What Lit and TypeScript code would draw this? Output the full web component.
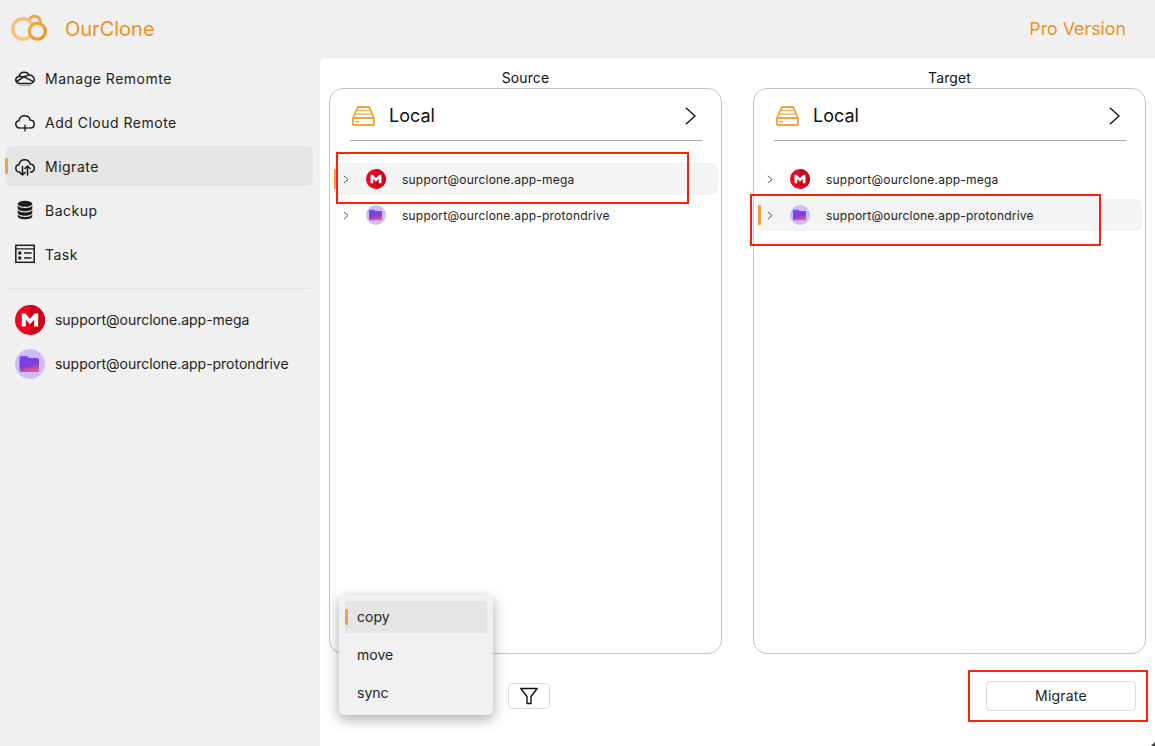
import { LitElement, html, css } from "lit";
import { customElement } from "lit/decorators.js";

const logo = html`<svg width="50" height="40" viewBox="0 0 50 40" fill="none">
  <defs>
    <linearGradient id="lg1" x1="0" y1="0" x2="1" y2="1"><stop offset="0" stop-color="#f5bb70"/><stop offset="1" stop-color="#f8c98a"/></linearGradient>
    <linearGradient id="lg2" x1="0" y1="0" x2="1" y2="1"><stop offset="0" stop-color="#f3ab4f"/><stop offset="1" stop-color="#ee9212"/></linearGradient>
  </defs>
  <circle cx="34.700" cy="12.800" r="5.700" stroke="#f0a440" stroke-width="2.800"/>
  <circle cx="23" cy="20" r="10.200" fill="#f0f0f0" stroke="url(#lg1)" stroke-width="3.400"/>
  <path d="M23 30.200H36" stroke="url(#lg1)" stroke-width="3.400"/>
  <circle cx="37.300" cy="22.200" r="8" fill="#f0f0f0" stroke="url(#lg2)" stroke-width="3.200"/>
</svg>`;

const navIcons: Record<string, unknown> = {
  manage: html`<svg width="20" height="20" viewBox="0 0 20 20" fill="none" stroke="#1c1c1c" stroke-width="1.500" stroke-linejoin="round" stroke-linecap="round">
    <path d="M4.600 15.400C2.400 15.200.8 13.800.8 11.800c0-1.800 1.400-3.200 3.200-3.400C4.500 6 6.600 4.200 9.200 4.200c2.200 0 4 1.100 4.900 2.900 2.900-.1 5.100 1.900 5.100 4.400 0 2.300-1.800 3.900-4 3.900z"/>
    <path d="M1.500 13.500 9 8.800l9.600 4.800M4.500 8.500l4.500.3M9 8.800l5-1.700"/>
    <path d="M5 17.300h10" stroke="#aaa"/>
  </svg>`,
  add: html`<svg width="20" height="20" viewBox="0 0 20 20" fill="none" stroke="#1c1c1c" stroke-width="1.500" stroke-linecap="round" stroke-linejoin="round">
    <path d="M5.500 16H4.600C2.300 16 .8 14.300.8 12.300c0-2 1.400-3.500 3.200-3.600C4.500 5.900 6.800 3.800 9.700 3.800c2.700 0 4.800 1.700 5.400 4.300 2.400.1 4.100 1.900 4.100 4.100 0 2.100-1.500 3.800-3.700 3.800h-1"/>
    <path d="M10 13v6M7 16h6" stroke-width="1.300"/>
  </svg>`,
  migrate: html`<svg width="20" height="20" viewBox="0 0 20 20" fill="none" stroke="#1c1c1c" stroke-width="1.500" stroke-linecap="round" stroke-linejoin="round">
    <path d="M4.500 16C2.300 16 .8 14.300.8 12.300c0-2 1.400-3.500 3.200-3.600C4.500 5.900 6.800 3.800 9.700 3.800c2.700 0 4.800 1.700 5.400 4.300 2.400.1 4.100 1.900 4.100 4.100 0 2.100-1.500 3.800-3.700 3.800"/>
    <path d="M7.500 10.500v8.500M5 16.500 7.500 19l2.500-2.500M12.500 19v-9M10 12.500 12.500 10l2.500 2.500" stroke-width="1.600"/>
  </svg>`,
  backup: html`<svg width="20" height="20" viewBox="0 0 20 20" fill="#1c1c1c">
    <ellipse cx="10" cy="3.800" rx="7.300" ry="3"/>
    <path d="M2.700 5.500c1 1.700 3.900 2.500 7.300 2.500s6.300-.8 7.300-2.500v2.700c0 1.700-3.300 3-7.300 3s-7.300-1.300-7.300-3z"/>
    <path d="M2.700 10c1 1.700 3.900 2.500 7.300 2.500s6.300-.8 7.300-2.500v2.700c0 1.700-3.300 3-7.300 3s-7.300-1.300-7.300-3z"/>
    <path d="M2.700 14.400c1 1.700 3.900 2.500 7.300 2.500s6.300-.8 7.300-2.500v1.900c0 1.700-3.300 3-7.300 3s-7.300-1.300-7.300-3z"/>
  </svg>`,
  task: html`<svg width="20" height="20" viewBox="0 0 20 20" fill="none" stroke="#1c1c1c" stroke-width="1.500">
    <rect x=".8" y="1.300" width="18.400" height="17"/>
    <path d="M.8 4.800h18.400M9 9h7.500M9 14h7.500" stroke-width="1.300"/>
    <rect x="3.300" y="7.500" width="3" height="3" fill="#1c1c1c" stroke="none"/>
    <rect x="3.300" y="12.500" width="3" height="3" fill="#1c1c1c" stroke="none"/>
  </svg>`,
};

const mega = (s: number) => html`<svg width=${s} height=${s} viewBox="0 0 30 30">
  <circle cx="15" cy="15" r="15" fill="#ee0322"/>
  <path d="M15 0a15 15 0 0 1 0 30z" fill="#cc0419"/>
  <path d="M6.800 21.500V8.500h3.500L15 13.800l4.700-5.300h3.500v13h-4v-7L15 19.200l-4.200-4.700v7z" fill="#fff"/>
</svg>`;

const proton = (s: number, id: string) => html`<svg width=${s} height=${s} viewBox="0 0 30 30">
  <defs>
    <linearGradient id=${id} x1="0" y1="0" x2="0.3" y2="1">
      <stop offset="0" stop-color="#7a4cf0"/><stop offset=".65" stop-color="#7b3fd8"/><stop offset="1" stop-color="#e0558f"/>
    </linearGradient>
  </defs>
  <circle cx="15" cy="15" r="15" fill="#cfbcfb"/>
  <path d="M4.500 8.800c0-1 .8-1.800 1.800-1.800h5.200c.6 0 1.100.3 1.500.8l1 1.200h8.200c1 0 1.800.8 1.800 1.800v10.400c0 1-.8 1.800-1.800 1.800H6.300c-1 0-1.800-.8-1.800-1.800z" fill=${`url(#${id})`}/>
</svg>`;

const drive = html`<svg width="23" height="20" viewBox="0 0 23 20" fill="none" stroke="#f2a238" stroke-width="1.800" stroke-linejoin="round">
  <path d="M1.200 12 5.700 1h11.600l4.500 11"/>
  <path d="M4.700 4.600h13.600M3.200 8.300h16.600" stroke="#f5b464" stroke-width="1.500"/>
  <rect x=".9" y="12" width="21.200" height="7" rx="1"/>
  <path d="M3.300 15.700h4" stroke-width="1.400"/>
</svg>`;

const bigChevron = html`<svg width="11" height="18" viewBox="0 0 11 18" fill="none" stroke="#111" stroke-width="1.400"><path d="M.8.700 10 9 .8 17.300"/></svg>`;
const smallChevron = html`<svg width="6" height="9" viewBox="0 0 6 9" fill="none" stroke="#555" stroke-width="1"><path d="M.8.700 5 4.500.8 8.300"/></svg>`;
const funnel = html`<svg width="18" height="18" viewBox="0 0 18 18" fill="none" stroke="#111" stroke-width="1.400" stroke-linejoin="round"><path d="M.8 1.500h16.400L11 9.500v7H7v-7z"/></svg>`;

const NAV = [
  { id: "manage", label: "Manage Remomte" },
  { id: "add", label: "Add Cloud Remote" },
  { id: "migrate", label: "Migrate", active: true },
  { id: "backup", label: "Backup" },
  { id: "task", label: "Task" },
];
const MEGA = "support@ourclone.app-mega";
const PROTON = "support@ourclone.app-protondrive";

@customElement("app-root")
export class AppRoot extends LitElement {
  static styles = css`
    :host {
      display: block;
      position: relative;
      width: 100%;
      height: 100vh;
      min-height: 746px;
      background: #f0f0f0;
      font-family: Inter, "Liberation Sans", sans-serif;
      color: #222;
      overflow: hidden;
    }
    .header {
      height: 58px;
      display: flex;
      align-items: center;
      box-sizing: border-box;
      padding: 0 29px 0 0;
    }
    .logo { display: flex; margin: 0 15px 0 0; flex: none; }
    .brand { font-size: 20px; color: #ef9020; }
    .pro { margin-left: auto; font-size: 17.800px; color: #ef9020; padding-bottom: 2px; }
    .body { display: flex; height: 688px; }
    .sidebar { width: 320px; flex: none; box-sizing: border-box; padding: 0 7px 0 5px; }
    .nav { display: flex; flex-direction: column; gap: 4px; }
    .nav-item {
      position: relative;
      height: 40px;
      display: flex;
      align-items: center;
      gap: 10px;
      padding-left: 10px;
      border-radius: 6px;
      font-size: 14px;
      letter-spacing: 0.5px;
    }
    .nav-item.active { background: #e6e6e6; }
    .nav-item.active::before, .menu-item.active::before {
      content: "";
      position: absolute;
      left: 0;
      top: 12px;
      width: 3px;
      height: 16px;
      background: #f0a03c;
      border-radius: 1px;
    }
    .nav-item svg { display: block; flex: none; }
    .sep { height: 1px; background: #e0e0e0; margin: 14px 2px 11px 2px; }
    .accounts { display: flex; flex-direction: column; gap: 4px; }
    .account { height: 40px; display: flex; align-items: center; gap: 10px; padding-left: 10px; font-size: 14px; letter-spacing: -0.03px; }
    .account span { padding-bottom: 2px; }
    .account svg { display: block; flex: none; }
    .main {
      position: relative;
      flex: 1;
      background: #fff;
      border-top-left-radius: 6px;
      box-sizing: border-box;
      padding: 12px 9px 0;
    }
    .columns { display: grid; grid-template-columns: 393px 393px; column-gap: 31px; }
    .col-title { height: 18px; line-height: 16px; text-align: center; font-size: 14px; color: #111; letter-spacing: 0.1px; }
    .panel {
      height: 566px;
      box-sizing: border-box;
      border: 1px solid #c4c4c4;
      border-radius: 14px;
      padding: 0 3px;
    }
    .panel-head {
      height: 52px;
      margin: 0 16px 0 17px;
      display: flex;
      align-items: center;
      border-bottom: 1px solid #a8a8a8;
      padding: 2px 6px 0 2px;
      box-sizing: border-box;
    }
    .panel-head svg { display: block; flex: none; }
    .panel-title { margin-left: 14px; font-size: 18px; color: #111; flex: 1; }
    .rows { display: flex; flex-direction: column; gap: 4px; margin-top: 22px; }
    .row {
      position: relative;
      height: 32px;
      display: flex;
      align-items: center;
      border-radius: 6px;
      padding-left: 10px;
      font-size: 12px;
      letter-spacing: 0.21px;
      color: #222;
    }
    .row.active { background: #f4f4f4; }
    .row.active::before {
      content: "";
      position: absolute;
      left: 1px;
      top: 6px;
      width: 3px;
      height: 20px;
      background: #f0a03c;
      border-radius: 1px;
    }
    .row svg { display: block; flex: none; }
    .row .ic { margin-left: 17px; margin-right: 16px; }
    .footer {
      display: flex;
      align-items: center;
      height: 30px;
      margin-top: 27px;
      padding-left: 179px;
      padding-right: 10px;
    }
    .filter {
      width: 42px;
      height: 26px;
      box-sizing: border-box;
      border: 1px solid #dcdcdc;
      border-radius: 4px;
      background: #fff;
      display: flex;
      align-items: center;
      justify-content: center;
      padding: 0;
    }
    .go {
      margin-left: auto;
      width: 150px;
      height: 30px;
      box-sizing: border-box;
      border: 1px solid #dcdcdc;
      border-radius: 4px;
      background: #fff;
      font: inherit;
      font-size: 14px;
      letter-spacing: 0.2px;
      color: #222;
      padding: 0 0 2px;
    }
    .menu {
      position: absolute;
      left: 19px;
      top: 537px;
      width: 154px;
      height: 120px;
      box-sizing: border-box;
      padding: 6px;
      background: #f1f1f1;
      border-radius: 5px;
      box-shadow: 0 4px 14px rgba(0, 0, 0, 0.34);
      display: flex;
      flex-direction: column;
      gap: 6px;
    }
    .menu-item {
      position: relative;
      height: 32px;
      box-sizing: border-box;
      flex: none;
      display: flex;
      align-items: center;
      padding: 0 0 2px 12px;
      border-radius: 4px;
      font-size: 14px;
      color: #222;
    }
    .menu-item.active { background: #e5e5e5; }
    .menu-item.active::before { top: 8px; }
    .mark { position: absolute; border: 2px solid #f5230a; box-sizing: border-box; pointer-events: none; }
    .m1 { left: 16px; top: 94px; width: 353px; height: 52px; }
    .m2 { left: 430px; top: 136px; width: 351px; height: 52px; }
    .m3 { left: 648px; top: 612px; width: 180px; height: 52px; }
    .corner { position: absolute; right: 0; bottom: 0; display: block; }
  `;

  private panel(title: string, activeIdx: number, prefix: string) {
    return html`<div>
      <div class="col-title">${title}</div>
      <div class="panel">
        <div class="panel-head">${drive}<span class="panel-title">Local</span>${bigChevron}</div>
        <div class="rows">
          <div class="row ${activeIdx === 0 ? "active" : ""}">${smallChevron}<span class="ic">${mega(20)}</span>${MEGA}</div>
          <div class="row ${activeIdx === 1 ? "active" : ""}">${smallChevron}<span class="ic">${proton(20, prefix + "p")}</span>${PROTON}</div>
        </div>
      </div>
    </div>`;
  }

  render() {
    return html`
      <div class="header">
        <span class="logo">${logo}</span>
        <span class="brand">OurClone</span>
        <span class="pro">Pro Version</span>
      </div>
      <div class="body">
        <aside class="sidebar">
          <div class="nav">
            ${NAV.map(
              (n) => html`<div class="nav-item ${n.active ? "active" : ""}">${navIcons[n.id]}<span>${n.label}</span></div>`
            )}
          </div>
          <div class="sep"></div>
          <div class="accounts">
            <div class="account">${mega(30)}<span>${MEGA}</span></div>
            <div class="account">${proton(30, "sp")}<span>${PROTON}</span></div>
          </div>
        </aside>
        <main class="main">
          <div class="columns">
            ${this.panel("Source", 0, "a")}
            ${this.panel("Target", 1, "b")}
          </div>
          <div class="footer">
            <button class="filter">${funnel}</button>
            <button class="go">Migrate</button>
          </div>
          <div class="menu">
            <div class="menu-item active">copy</div>
            <div class="menu-item">move</div>
            <div class="menu-item">sync</div>
          </div>
          <div class="mark m1"></div>
          <div class="mark m2"></div>
          <div class="mark m3"></div>
        </main>
      </div>
      <svg class="corner" width="4" height="4" viewBox="0 0 4 4"><path d="M4 0v4H0z" fill="#333"/></svg>
    `;
  }
}
